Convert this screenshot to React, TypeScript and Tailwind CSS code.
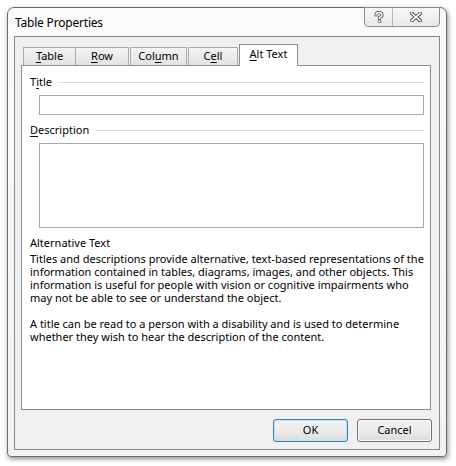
import React from 'react';

const Key = ({ children }: { children: React.ReactNode }) => (
  <span className="underline underline-offset-[2px] decoration-1">{children}</span>
);

const HelpIcon = () => (
  <svg width="10" height="12" viewBox="0 0 10 12">
    <path d="M2 4 Q2 1.5 5 1.5 Q8 1.5 8 4 Q8 5.5 5.5 6.5 L5.5 8" fill="none" stroke="#5a5a5a" strokeWidth="3.2" strokeLinecap="round" />
    <path d="M2 4 Q2 1.5 5 1.5 Q8 1.5 8 4 Q8 5.5 5.5 6.5 L5.5 8" fill="none" stroke="#ffffff" strokeWidth="1.4" strokeLinecap="round" />
    <circle cx="5.5" cy="10.3" r="1.5" fill="#ffffff" stroke="#5a5a5a" strokeWidth="0.9" />
  </svg>
);

const CloseIcon = () => (
  <svg width="12" height="10" viewBox="0 0 12 10">
    <path d="M1.8 1.5 L10.2 8.5 M10.2 1.5 L1.8 8.5" stroke="#5a5a5a" strokeWidth="3.6" strokeLinecap="square" />
    <path d="M1.8 1.5 L10.2 8.5 M10.2 1.5 L1.8 8.5" stroke="#ffffff" strokeWidth="1.6" strokeLinecap="square" />
  </svg>
);

const SectionLabel = ({ children }: { children: React.ReactNode }) => (
  <div className="flex items-center h-[16px] pl-[8px] pr-[6px]">
    <span className="leading-[16px]">{children}</span>
    <div className="flex-1 h-px bg-[#d5dfe5] ml-[6px]" />
  </div>
);

export default function App() {
  return (
    <div className="w-[456px] h-[466px] bg-white p-[7px] font-['Noto_Sans',sans-serif] text-[11px] text-black">
      {/* window frame */}
      <div className="w-[440px] h-[450px] flex flex-col border border-[#6b6b6b] rounded-t-[7px] rounded-b-[4px] bg-gradient-to-b from-[#fbfbfb] to-[#f2f2f2] shadow-[1px_2px_5px_rgba(0,0,0,0.45)]">
        {/* title bar */}
        <div className="h-[28px] flex items-start justify-between pl-[7px] pr-[6px]">
          <div className="h-[29px] flex items-center text-[12px] tracking-[-0.2px]">Table Properties</div>
          <div className="-mt-px flex h-[20px] border border-[#8e8e8e] rounded-b-[4px] bg-gradient-to-b from-[#f7f7f7] to-[#e9e9e9]">
            <div className="w-[28px] flex items-center justify-center border-r border-[#b5b5b5]">
              <HelpIcon />
            </div>
            <div className="w-[46px] flex items-center justify-center">
              <CloseIcon />
            </div>
          </div>
        </div>

        {/* client area */}
        <div className="flex-1 mx-[6px] mb-[6px] border border-[#828790] bg-[#f0f0f0] flex flex-col">
          {/* tabs */}
          <div className="mt-[7px] ml-[8px] h-[21px] flex items-end">
            <div className="w-[53px] h-[18px] border border-b-0 border-[#acacac] bg-gradient-to-b from-[#f3f3f3] to-[#e3e3e3] flex items-center justify-center">
              <span><Key>T</Key>able</span>
            </div>
            <div className="w-[53px] h-[18px] border border-b-0 border-l-0 border-[#acacac] bg-gradient-to-b from-[#f3f3f3] to-[#e3e3e3] flex items-center justify-center">
              <span><Key>R</Key>ow</span>
            </div>
            <div className="ml-px w-[57px] h-[18px] border border-b-0 border-[#acacac] bg-gradient-to-b from-[#f3f3f3] to-[#e3e3e3] flex items-center justify-center">
              <span>Col<Key>u</Key>mn</span>
            </div>
            <div className="ml-px w-[50px] h-[18px] border border-b-0 border-[#acacac] bg-gradient-to-b from-[#f3f3f3] to-[#e3e3e3] flex items-center justify-center">
              <span>C<Key>e</Key>ll</span>
            </div>
            <div className="relative z-10 -mb-px ml-px w-[59px] h-[22px] border border-b-0 border-[#898c95] bg-white flex items-center justify-center pb-[2px]">
              <span><Key>A</Key>lt Text</span>
            </div>
          </div>

          {/* tab page */}
          <div className="ml-[6px] mr-[8px] h-[345px] border border-[#898c95] bg-white flex flex-col">
            <div className="mt-[8px]">
              <SectionLabel>
                T<Key>i</Key>tle
              </SectionLabel>
            </div>
            <div className="mt-[5px] ml-[17px] mr-[6px] h-[20px] border border-[#a9a9a9] bg-white" />

            <div className="mt-[7px]">
              <SectionLabel>
                <Key>D</Key>escription
              </SectionLabel>
            </div>
            <div className="mt-[5px] ml-[17px] mr-[6px] h-[85px] border border-[#a9a9a9] bg-white" />

            <div className="mt-[8px] pl-[8px] leading-[13px]">
              <div className="whitespace-nowrap">Alternative Text</div>
              <div className="mt-[3px] whitespace-nowrap">
                <div>Titles and descriptions provide alternative, text-based representations of the</div>
                <div>information contained in tables, diagrams, images, and other objects. This</div>
                <div>information is useful for people with vision or cognitive impairments who</div>
                <div>may not be able to see or understand the object.</div>
                <div className="mt-[13px]">A title can be read to a person with a disability and is used to determine</div>
                <div>whether they wish to hear the description of the content.</div>
              </div>
            </div>
          </div>

          {/* buttons */}
          <div className="mt-[9px] mr-[7px] flex justify-end gap-[9px]">
            <button className="w-[75px] h-[23px] rounded-[3px] border border-[#3c7fb1] bg-gradient-to-b from-[#f2f2f2] via-[#ebebeb] to-[#dcdcdc] shadow-[inset_0_0_0_1px_#b9e4f7]">
              OK
            </button>
            <button className="w-[75px] h-[23px] rounded-[3px] border border-[#707070] bg-gradient-to-b from-[#f2f2f2] via-[#ebebeb] to-[#dcdcdc] shadow-[inset_0_0_0_1px_#fcfcfc]">
              Cancel
            </button>
          </div>
        </div>
      </div>
    </div>
  );
}
